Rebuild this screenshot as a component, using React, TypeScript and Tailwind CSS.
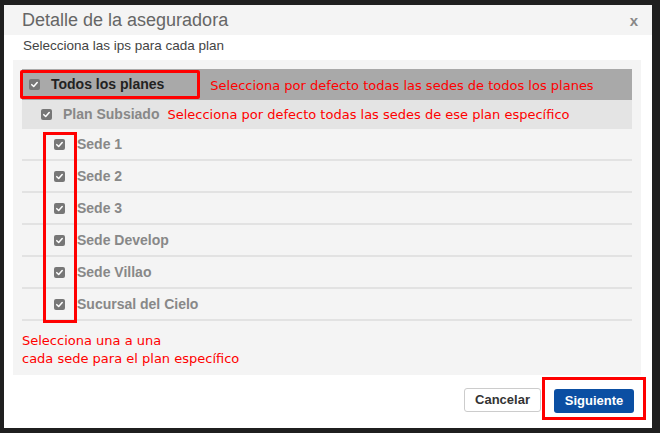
import React from 'react';

const SEDES = ['Sede 1', 'Sede 2', 'Sede 3', 'Sede Develop', 'Sede Villao', 'Sucursal del Cielo'];

function Check() {
  return (
    <span className="flex items-center justify-center w-[11px] h-[11px] rounded-[2px] shrink-0 bg-[#777]">
      <svg viewBox="0 0 10 10" className="w-[9px] h-[9px]">
        <path d="M2 5.2 L4.1 7.2 L8 2.8" fill="none" stroke="#fff" strokeWidth="1.7" strokeLinecap="round" strokeLinejoin="round" />
      </svg>
    </span>
  );
}

export default function App() {
  return (
    <div className="w-[660px] h-[433px] bg-[#1f1f1f] pt-[5px] pl-[4px] overflow-hidden font-['Liberation_Sans',Arial,sans-serif]">
      <div className="w-[648px] h-[423px] bg-white flex flex-col">
        {/* Header */}
        <div className="h-[30px] bg-[#f4f4f4] flex items-center justify-between pl-[18px] pr-[14px]">
          <span className="text-[18px] text-[#666] leading-none">Detalle de la aseguradora</span>
          <span className="text-[15px] font-bold text-[#888] leading-none">x</span>
        </div>

        {/* Body */}
        <div className="pl-[19px] pt-[3px] h-[25px] text-[13.5px] text-[#444] leading-[16px]">
          Selecciona las ips para cada plan
        </div>

        <div className="ml-[9px] mr-[11px] h-[315px] bg-[#f4f4f4] px-[9px] pt-[9px]">
          {/* Todos los planes */}
          <div className="relative h-[31px] bg-[#a9a9a9] flex items-center pl-[7px]">
            <Check />
            <span className="ml-[11px] text-[14px] font-bold text-[#222]">Todos los planes</span>
            <span className="ml-[46px] pt-[3px] text-[13px] text-[#ff0000] font-['DejaVu_Sans',sans-serif]">
              Selecciona por defecto todas las sedes de todos los planes
            </span>
            <div className="absolute left-[-2px] top-[1px] w-[180px] h-[29px] border-[3px] border-[#ff0000] rounded-[2px]" />
          </div>

          {/* Plan Subsiado */}
          <div className="h-[29px] bg-[#e4e4e4] flex items-center pl-[19px]">
            <Check />
            <span className="ml-[11px] text-[14px] font-bold text-[#888]">Plan Subsiado</span>
            <span className="ml-[8px] pt-[1px] text-[13px] text-[#ff0000] font-['DejaVu_Sans',sans-serif]">
              Selecciona por defecto todas las sedes de ese plan específico
            </span>
          </div>

          {/* Sedes */}
          <div className="relative">
            {SEDES.map((s) => (
              <div key={s} className="h-[32px] border-b-2 border-[#e2e2e2] flex items-center pl-[32px]">
                <Check />
                <span className="ml-[12px] text-[14px] font-bold text-[#888]">{s}</span>
              </div>
            ))}
            <div className="absolute left-[21px] top-[3px] w-[34px] h-[191px] border-[3px] border-[#ff0000]" />
          </div>

          <div className="pt-[11px] text-[13px] leading-[18px] text-[#ff0000] font-['DejaVu_Sans',sans-serif]">
            <div>Selecciona una a una</div>
            <div>cada sede para el plan específico</div>
          </div>
        </div>

        {/* Footer */}
        <div className="flex-1 flex items-start justify-end pt-[13px] pr-[18px] gap-[13px]">
          <button className="w-[77px] h-[24px] bg-white border border-[#ccc] rounded-[3px] text-[13px] font-bold text-[#333]">
            Cancelar
          </button>
          <div className="relative">
            <button className="w-[80px] h-[24px] bg-[#0b4fa3] rounded-[3px] text-[13px] font-bold text-white">
              Siguiente
            </button>
            <div className="absolute left-[-12px] top-[-11px] w-[104px] h-[43px] border-[3px] border-[#ff0000]" />
          </div>
        </div>
      </div>
    </div>
  );
}
